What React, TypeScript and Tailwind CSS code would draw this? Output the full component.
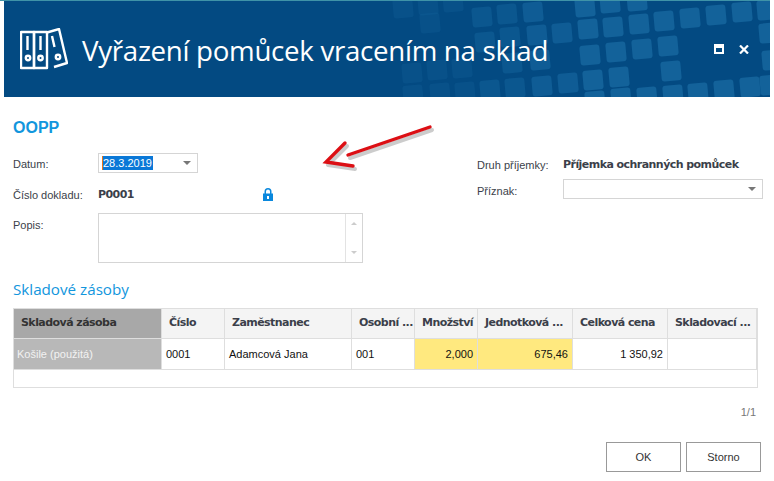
import React from 'react';

const tiles: [number, number][] = [
  [403, 8], [428, 5], [453, 2], [430, 23], [485, 42], [510, 37], [412, 73], [437, 70], [462, 68], [413, 95], [440, 93], [465, 92],
  [482, 17], [507, 14], [533, 12], [585, 7], [610, 3], [637, 1],
  [537, 35], [562, 33], [588, 29], [613, 27], [639, 24], [664, 21], [690, 18], [716, 15], [742, 12], [767, 10],
  [512, 63], [540, 60], [590, 55], [616, 52], [642, 49], [668, 46], [769, 33],
  [593, 80], [619, 77], [671, 71], [772, 60],
  [490, 90], [515, 88], [542, 86], [568, 83], [770, 85],
  [595, 101], [621, 98], [647, 97], [673, 95], [698, 93], [724, 90], [750, 87],
];

function tileOpacity(x: number) {
  if (x < 470) return 0.3;
  if (x < 530) return 0.5;
  if (x < 580) return 0.75;
  return 0.95;
}

function Binders() {
  return (
    <svg width="48" height="42" viewBox="0 0 48 42" fill="none" stroke="white" strokeWidth="2.4" strokeLinejoin="round" className="shrink-0">
      <rect x="1" y="4" width="13" height="36" />
      <rect x="14" y="4" width="13" height="36" />
      <path d="M27 4.5L39 1L47 35L34 39" />
      <path d="M7.5 8v14M20.5 8v14M32 8l2.5 11" />
      <circle cx="8" cy="30" r="2.2" />
      <circle cx="20.5" cy="30" r="2.2" />
      <circle cx="38" cy="29" r="2.2" />
    </svg>
  );
}

function Caret() {
  return <span className="w-0 h-0 border-x-[4px] border-x-transparent border-t-[4px] border-t-[#777]" />;
}

const cols = [
  { title: 'Číslo', w: 'w-[63px]', value: '0001', cell: 'pl-[4px] bg-white' },
  { title: 'Zaměstnanec', w: 'w-[127px]', value: 'Adamcová Jana', cell: 'pl-[4px] bg-white' },
  { title: 'Osobní ...', w: 'w-[63px]', value: '001', cell: 'pl-[4px] bg-white' },
  { title: 'Množství', w: 'w-[63px]', value: '2,000', cell: 'justify-end pr-[4px] bg-[#ffe97f]' },
  { title: 'Jednotková ...', w: 'w-[95px]', value: '675,46', cell: 'justify-end pr-[4px] bg-[#ffe97f]' },
  { title: 'Celková cena', w: 'w-[95px]', value: '1 350,92', cell: 'justify-end pr-[4px] bg-white' },
  { title: 'Skladovací ...', w: 'w-[89px]', value: '', cell: 'bg-white' },
];

const label = "font-['Liberation_Sans',sans-serif] text-[11px] tracking-normal";

export default function App() {
  return (
    <div className="relative w-[774px] h-[481px] bg-white overflow-hidden text-[#3b3f4a] text-[11px] font-['DejaVu_Sans',sans-serif] tracking-[-0.55px]">
      <div className="h-px bg-[#3f93a8] w-[770px]" />
      <div className="relative ml-[4px] w-[766px] h-[96px] bg-[#034a82] overflow-hidden flex items-center pl-[16px]">
        <svg className="absolute left-0 top-0" width="766" height="96" viewBox="4 1 766 96">
          {tiles.map(([x, y], i) => (
            <rect key={i} x={x - 10} y={y - 10} width="20" height="20" rx="3" fill="#14639b" opacity={tileOpacity(x)} transform={`rotate(-5 ${x} ${y})`} />
          ))}
        </svg>
        <div className="relative flex"><Binders /></div>
        <div className="relative ml-[14px] mt-[4px] text-white text-[27.7px] tracking-[-0.3px] font-['Open_Sans',sans-serif] leading-none whitespace-nowrap">Vyřazení pomůcek vracením na sklad</div>
        <div className="absolute left-[710px] top-[43px] w-[10px] h-[10px] bg-white flex items-center justify-center">
          <span className="w-[6px] h-[4px] mt-[1px] bg-[#034a82]" />
        </div>
        <svg className="absolute left-[735px] top-[44px]" width="10" height="9" viewBox="0 0 10 9" stroke="white" strokeWidth="2.2">
          <path d="M1 0.5l8 8M9 0.5l-8 8" />
        </svg>
      </div>

      <div className="ml-[13px] mt-[21px] text-[#1296dd] text-[16px] font-bold leading-[20px] font-['Liberation_Sans',sans-serif] tracking-normal">OOPP</div>

      <div className="flex mt-[15px] ml-[13px]">
        <div className="w-[450px]">
          <div className="flex items-center h-[20px]">
            <span className={`w-[85px] pt-[2px] ${label}`}>Datum:</span>
            <div className="w-[100px] h-[20px] border border-[#d5d5d5] flex items-center justify-between pl-[3px] pr-[6px]">
              <span className={`bg-[#0a78d7] text-white leading-[14px] pr-[1px] border-l border-[#e8751a] ${label}`}>28.3.2019</span>
              <Caret />
            </div>
          </div>
          <div className="flex items-center h-[20px] mt-[11px]">
            <span className={`w-[85px] pt-[2px] ${label}`}>Číslo dokladu:</span>
            <span className="w-[165px] pt-[2px] font-bold">P0001</span>
            <svg width="10" height="13" viewBox="0 0 10 13" fill="#0a88dd">
              <path fillRule="evenodd" d="M0 5.5h1.5V3.5a3.5 3.5 0 0 1 7 0v2H10V13H0zM3 5.5h4V3.6a2 2 0 0 0-4 0zM4 8v3h2V8z" />
            </svg>
          </div>
          <div className="flex mt-[9px]">
            <span className={`w-[85px] pt-[4px] ${label}`}>Popis:</span>
            <div className="w-[265px] h-[50px] border border-[#d5d5d5] flex justify-end">
              <div className="w-[17px] border-l border-[#e3e3e3] flex flex-col items-center justify-between py-[8px]">
                <span className="w-0 h-0 border-x-[3px] border-x-transparent border-b-[3px] border-b-[#ccc]" />
                <span className="w-0 h-0 border-x-[3px] border-x-transparent border-t-[3px] border-t-[#ccc]" />
              </div>
            </div>
          </div>
        </div>
        <div className="ml-[14px] pt-[2px]">
          <div className="flex items-center h-[18px]">
            <span className={`w-[86px] pt-[2px] ${label}`}>Druh příjemky:</span>
            <span className="font-bold pt-[2px] whitespace-nowrap">Příjemka ochranných pomůcek</span>
          </div>
          <div className="flex items-center h-[20px] mt-[6px]">
            <span className={`w-[86px] pt-[4px] ${label}`}>Příznak:</span>
            <div className="w-[200px] h-[20px] border border-[#d5d5d5] flex items-center justify-end pr-[6px]"><Caret /></div>
          </div>
        </div>
      </div>

      <div className="ml-[13px] mt-[14px] text-[#1296dd] text-[15.2px] leading-[24px] font-['Open_Sans',sans-serif] tracking-normal">Skladové zásoby</div>

      <div className="ml-[13px] mt-[7px] w-[745px] border border-[#dedede]">
        <div className="flex h-[30px] font-bold border-b border-[#dedede] bg-[#f4f4f4]">
          <div className="w-[148px] bg-[#a8a8a8] border-r border-[#dedede] flex items-center pl-[7px] text-[#333]">Skladová zásoba</div>
          {cols.map(c => (
            <div key={c.title} className={`${c.w} pl-[7px] border-r border-[#dedede] flex items-center whitespace-nowrap overflow-hidden`}>{c.title}</div>
          ))}
        </div>
        <div className={`flex h-[31px] border-b border-[#dedede] text-[#111] ${label}`}>
          <div className="w-[148px] bg-[#b8b8b8] border-r border-[#dedede] flex items-center pl-[3px] text-[#f2f2f2]">Košile (použitá)</div>
          {cols.map(c => (
            <div key={c.title} className={`${c.w} ${c.cell} border-r border-[#dedede] flex items-center whitespace-nowrap`}>{c.value}</div>
          ))}
        </div>
        <div className="h-[17px]" />
      </div>

      <div className={`w-[756px] text-right mt-[16px] leading-[16px] text-[#777] ${label}`}>1/1</div>

      <div className={`flex justify-end gap-[5px] w-[761px] mt-[22px] ${label}`}>
        <button className="w-[75px] h-[30px] border border-[#999] pt-[1px] text-[#333]">OK</button>
        <button className="w-[75px] h-[30px] border border-[#999] pt-[1px] text-[#333]">Storno</button>
      </div>

      <svg className="absolute left-[320px] top-[120px]" width="120" height="60" viewBox="0 0 120 60" fill="none">
        <g stroke="#555" strokeOpacity="0.3" strokeWidth="4" strokeLinecap="round" strokeLinejoin="round" transform="translate(2 3)">
          <path d="M110 7L28 35M25 23L6 42L33 46" />
        </g>
        <path d="M110 7L28 35M25 23L6 42L33 46" stroke="#dc0f14" strokeWidth="3.4" strokeLinecap="round" strokeLinejoin="miter" />
      </svg>
    </div>
  );
}
